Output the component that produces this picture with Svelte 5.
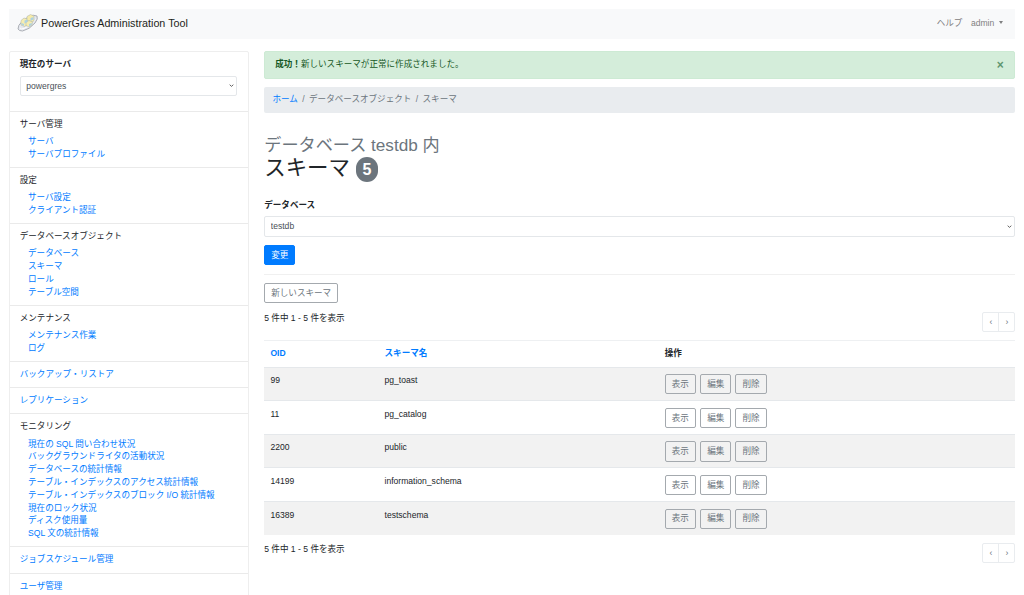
<script>
  const menu = [
    { title: 'サーバ管理', links: ['サーバ', 'サーバプロファイル'] },
    { title: '設定', links: ['サーバ設定', 'クライアント認証'] },
    { title: 'データベースオブジェクト', links: ['データベース', 'スキーマ', 'ロール', 'テーブル空間'] },
    { title: 'メンテナンス', links: ['メンテナンス作業', 'ログ'] },
    { title: 'バックアップ・リストア' },
    { title: 'レプリケーション' },
    {
      title: 'モニタリング',
      links: [
        '現在の SQL 問い合わせ状況',
        'バックグラウンドライタの活動状況',
        'データベースの統計情報',
        'テーブル・インデックスのアクセス統計情報',
        'テーブル・インデックスのブロック I/O 統計情報',
        '現在のロック状況',
        'ディスク使用量',
        'SQL 文の統計情報',
      ],
    },
    { title: 'ジョブスケジュール管理' },
    { title: 'ユーザ管理' },
  ];

  const schemas = [
    { oid: 99, name: 'pg_toast' },
    { oid: 11, name: 'pg_catalog' },
    { oid: 2200, name: 'public' },
    { oid: 14199, name: 'information_schema' },
    { oid: 16389, name: 'testschema' },
  ];

  const actions = ['表示', '編集', '削除'];

  let showAlert = $state(true);
</script>

{#snippet chevron()}
  <svg class="chevron" viewBox="0 0 6 4" aria-hidden="true">
    <path d="M0.8 0.8 L3 2.8 L5.2 0.8" fill="none" stroke="#444" stroke-width="1" />
  </svg>
{/snippet}

{#snippet pager()}
  <div class="pager-row">
    <span>{schemas.length} 件中 1 - {schemas.length} 件を表示</span>
    <nav class="pagination" aria-label="ページ">
      <span>‹</span>
      <span>›</span>
    </nav>
  </div>
{/snippet}

<div class="page">
  <header class="navbar">
    <a class="brand" href="#top">
      <svg class="logo" viewBox="0 0 42 36" aria-hidden="true">
        <path d="M2 30 Q1 23 11 14 L25 4 Q33 1 40 4 Q43 9 36 18 Q25 31 11 34 Q4 34 2 30 Z" fill="#e6e9ef" stroke="#9a9ea6" stroke-width="1.6" />
        <path d="M6 28 Q8 31 14 29 Q27 25 37 11" fill="none" stroke="#fff" stroke-width="2" />
        <path d="M8 13 L14 8 L21 10 L21 21 L15 25 L8 22 Z" fill="#f6edb0" stroke="#a9b0a8" />
        <path d="M20 5 L27 1 L34 4 L34 14 L27 17 L20 13 Z" fill="#f6eba8" stroke="#a9b0a8" />
        <path d="M18 16 L24 13 L31 16 L30 22 L24 26 L18 23 Z" fill="#f6edb0" stroke="#a9b0a8" />
        <path d="M15 13 L21 11 L21 16 L15 19 Z M27 8 L33 6 L33 11 L27 14 Z M9 18 L14 20 L14 24 L9 21 Z M24 20 L30 18 L29 22 L24 25 Z" fill="#add2e2" />
      </svg>
      PowerGres Administration Tool
    </a>
    <nav class="nav-links">
      <a href="#help">ヘルプ</a>
      <a href="#admin">admin <i class="caret"></i></a>
    </nav>
  </header>

  <div class="columns">
    <aside class="sidebar">
      <div class="server-form">
        <label for="server">現在のサーバ</label>
        <div class="select-box">
          <select id="server"><option>powergres</option></select>
          {@render chevron()}
        </div>
      </div>
      {#each menu as group}
        <section class="menu-item">
          {#if group.links}
            <div>{group.title}</div>
            <ul>
              {#each group.links as link}
                <li><a href="#menu">{link}</a></li>
              {/each}
            </ul>
          {:else}
            <a href="#menu">{group.title}</a>
          {/if}
        </section>
      {/each}
    </aside>

    <main>
      {#if showAlert}
        <div class="alert" role="alert">
          <span><strong>成功！</strong>新しいスキーマが正常に作成されました。</span>
          <button class="close" type="button" aria-label="閉じる" onclick={() => (showAlert = false)}>×</button>
        </div>
      {/if}

      <nav class="breadcrumb">
        <a href="#home">ホーム</a>
        <span>/</span>
        <span>データベースオブジェクト</span>
        <span>/</span>
        <span>スキーマ</span>
      </nav>

      <h1>
        <small>データベース testdb 内</small>
        <span class="title">スキーマ <span class="badge">{schemas.length}</span></span>
      </h1>

      <form class="database-form">
        <label for="database">データベース</label>
        <div class="select-box">
          <select id="database"><option>testdb</option></select>
          {@render chevron()}
        </div>
        <button class="btn primary" type="button">変更</button>
      </form>

      <div class="toolbar">
        <button class="btn" type="button">新しいスキーマ</button>
      </div>

      {@render pager()}

      <table>
        <thead>
          <tr>
            <th><a href="#oid">OID</a></th>
            <th><a href="#name">スキーマ名</a></th>
            <th>操作</th>
          </tr>
        </thead>
        <tbody>
          {#each schemas as schema}
            <tr>
              <td>{schema.oid}</td>
              <td>{schema.name}</td>
              <td class="actions">
                {#each actions as action}
                  <button class="btn" type="button">{action}</button>
                {/each}
              </td>
            </tr>
          {/each}
        </tbody>
      </table>

      {@render pager()}
    </main>
  </div>
</div>

<style>
  :global(html) {
    font-size: 8.5333px;
  }

  :global(body) {
    background: #fff;
    overflow: hidden;
  }

  .page,
  .page * {
    box-sizing: border-box;
  }

  .page {
    height: 595px;
    padding: 1rem 1rem 0;
    overflow: hidden;
    font-family: 'Liberation Sans', 'Noto Sans CJK JP', sans-serif;
    font-size: 8.57px;
    line-height: 12.8px;
    color: #212529;
  }

  a {
    color: #007bff;
    text-decoration: none;
  }

  button,
  select {
    font: inherit;
    margin: 0;
  }

  .navbar {
    display: flex;
    align-items: center;
    justify-content: space-between;
    height: 30px;
    padding: 0 1rem;
    background: #f8f9fa;
  }

  .brand {
    display: flex;
    align-items: center;
    gap: 3px;
    margin-top: -1px;
    font-size: 10.75px;
    color: #1d1f20;
  }

  .logo {
    width: 21px;
    height: 18px;
  }

  .nav-links {
    display: flex;
    gap: 8.5px;
    padding-right: 4.3px;
  }

  .nav-links a {
    color: #7f8081;
  }

  .caret {
    display: inline-block;
    margin-left: 2px;
    vertical-align: 2px;
    border-top: 3px solid;
    border-right: 2.5px solid transparent;
    border-left: 2.5px solid transparent;
  }

  .columns {
    display: grid;
    grid-template-columns: 240px 1fr;
    gap: 15.7px;
    align-items: start;
    margin-top: 12.7px;
  }

  .sidebar {
    border: 1px solid #eeeeee;
    border-radius: 2px;
  }

  .server-form {
    height: 59px;
    padding: 6.2px 10.2px 0;
  }

  label {
    display: block;
    margin-bottom: 4.7px;
    font-weight: 700;
  }

  .select-box {
    display: grid;
    align-items: center;
    height: 20.3px;
    border: 1px solid #e4e7ea;
    border-radius: 2px;
  }

  .select-box > :global(*) {
    grid-area: 1 / 1;
  }

  select {
    appearance: none;
    width: 100%;
    height: 100%;
    padding: 0 5.6px;
    border: 0;
    background: none;
    color: #495057;
  }

  .chevron {
    justify-self: end;
    width: 5px;
    height: 3.4px;
    margin-right: 2px;
    pointer-events: none;
  }

  .menu-item {
    padding: 6px 10.2px calc(0.75rem + 0.01px);
    border-top: 1px solid #eaeaea;
  }

  .menu-item > a {
    display: block;
  }

  ul {
    margin: 0.5rem 0 0;
    padding: 0 0 0 8.3px;
    list-style: none;
  }

  .alert {
    display: flex;
    align-items: center;
    justify-content: space-between;
    height: 27.4px;
    padding: 0 10.6px 0.4px 10px;
    border: 1px solid #cdead4;
    border-radius: 2px;
    background: #d4edda;
    color: #155724;
  }

  .close {
    padding: 0;
    border: 0;
    background: none;
    font-size: 12px;
    font-weight: 700;
    line-height: 1;
    color: #5f9670;
  }

  .breadcrumb {
    display: flex;
    gap: 4.4px;
    margin-top: 8.4px;
    padding: 0.75rem 8.2px;
    border-radius: 2px;
    background: #e9ecef;
    color: #6c757d;
  }

  h1 {
    margin: 22px 0 0;
    font-size: 21.45px;
    font-weight: 400;
    line-height: 1.2;
  }

  h1 small {
    display: block;
    font-size: 80%;
    color: #6c757d;
  }

  .title {
    display: flex;
    align-items: center;
    gap: 6px;
    height: 27px;
  }

  .badge {
    margin-top: 2px;
    padding: 4.2px 6.5px;
    border-radius: 12px;
    background: #6c757d;
    color: #fff;
    font-size: 16px;
    font-weight: 700;
    line-height: 1;
  }

  .database-form {
    margin-top: 16.6px;
    padding-bottom: 8.2px;
    border-bottom: 1px solid #f0f0f0;
  }

  .btn {
    height: 20.3px;
    padding: 0 6px;
    border: 1px solid #a4a9ae;
    border-radius: 2px;
    background: none;
    color: #6c757d;
  }

  .btn.primary {
    display: block;
    margin-top: 8.5px;
    border-color: #007bff;
    background: #007bff;
    color: #fff;
  }

  .toolbar {
    display: flex;
    padding-top: 8.5px;
  }

  .pager-row {
    display: flex;
    justify-content: space-between;
    margin-top: 8.5px;
  }

  .pagination {
    display: flex;
    width: 33px;
    height: 20.3px;
    border: 1px solid #e9ecef;
    border-radius: 2px;
    color: #6c757d;
  }

  .pagination span {
    flex: 1;
    line-height: 18px;
    text-align: center;
  }

  .pagination span + span {
    border-left: 1px solid #e9ecef;
  }

  table {
    display: block;
    margin-top: 8.2px;
  }

  thead,
  tbody {
    display: block;
  }

  tr {
    display: grid;
    grid-template-columns: 114.1px 280.3px 1fr;
    height: 33.6px;
    border-top: 1px solid #e5e8eb;
  }

  thead tr {
    height: 26.4px;
    border-top-color: #eef0f2;
  }

  tbody tr:nth-child(odd) {
    background: #f2f2f2;
  }

  th,
  td {
    padding: 5.9px 6.2px 0;
    text-align: left;
  }

  td {
    padding-top: 6.5px;
  }

  .actions {
    display: flex;
    gap: 4.2px;
  }
</style>
